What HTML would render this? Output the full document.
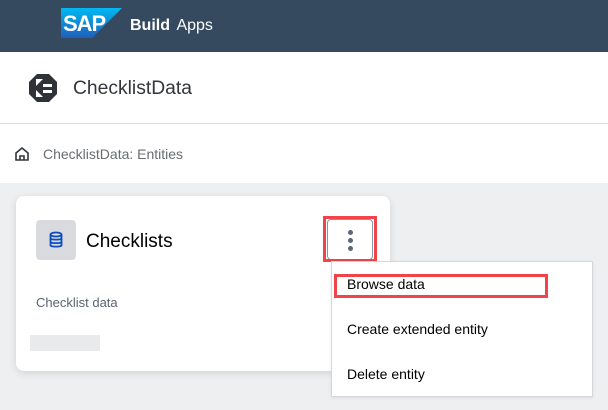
<!DOCTYPE html><html><head><style>
body{margin:0;width:608px;height:410px;overflow:hidden;font-family:"Liberation Sans",sans-serif;background:#eeeff1;position:relative}
div{position:absolute;box-sizing:border-box}
</style></head><body>
<div style="left:0;top:0;width:608px;height:52px;background:#354a5f"></div>
<svg style="position:absolute;left:61px;top:8px" width="61" height="30" viewBox="0 0 61 30"><defs><linearGradient id="g" x1="0" y1="0" x2="0" y2="1"><stop offset="0" stop-color="#00b8f1"/><stop offset="1" stop-color="#1e5fbb"/></linearGradient></defs><polygon points="0,0 61,0 31,30 0,30" fill="url(#g)"/><text x="2" y="23" font-family="Liberation Sans" font-weight="bold" font-size="22" fill="#fff" letter-spacing="-1">SAP</text></svg>
<div style="left:130px;top:17px;color:#fff;font-size:16px;font-weight:bold">Build <span style="font-weight:normal;margin-left:2px">Apps</span></div>
<div style="left:0;top:52px;width:608px;height:131px;background:#fff"></div>
<div style="left:0;top:123px;width:608px;height:1px;background:#dcdcdc"></div>
<svg style="position:absolute;left:28px;top:73px" width="30" height="30" viewBox="0 0 30 30"><polygon points="9,1 21,1 29,9 29,21 21,29 9,29 1,21 1,9" fill="#2f3338"/><polygon points="8,6 15,6 8,13" fill="#fff"/><polygon points="8,17 8,24 15,24" fill="#fff"/><rect x="15" y="11" width="9" height="3" fill="#fff"/><rect x="15" y="17" width="9" height="3" fill="#fff"/></svg>
<div style="left:73px;top:78px;font-size:19.3px;color:#32363a">ChecklistData</div>
<svg style="position:absolute;left:14px;top:146px" width="16" height="16" viewBox="0 0 16 16"><path d="M2 7 L8 2 L14 7 V14 H2 Z M6 14 V10 H10 V14" fill="none" stroke="#32363a" stroke-width="1.6"/></svg>
<div style="left:43px;top:146px;font-size:14px;color:#6a6d70">ChecklistData: Entities</div>
<div style="left:16px;top:196px;width:374px;height:175px;background:#fff;border-radius:8px;box-shadow:0 2px 8px rgba(0,0,0,.12)"></div>
<div style="left:36px;top:220px;width:40px;height:40px;background:#d9dbdf;border-radius:4px"></div>
<svg style="position:absolute;left:47px;top:231px" width="18" height="18" viewBox="0 0 18 18"><g fill="none" stroke="#0a4bbf" stroke-width="1.8"><ellipse cx="9" cy="3.5" rx="5.5" ry="2"/><path d="M3.5 3.5V14.5C3.5 16 14.5 16 14.5 14.5V3.5M3.5 7.5C3.5 9 14.5 9 14.5 7.5M3.5 11C3.5 12.5 14.5 12.5 14.5 11"/></g></svg>
<div style="left:86px;top:231px;font-size:19px;color:#000">Checklists</div>
<div style="left:36px;top:295px;font-size:13px;color:#5b6470">Checklist data</div>
<div style="left:30px;top:335px;width:70px;height:16px;background:#e9eaec"></div>
<div style="left:327px;top:219px;width:46px;height:41px;border:1px solid #8a96a3;border-radius:4px;background:#fff"></div>
<div style="left:348px;top:230px;width:5px;height:5px;border-radius:50%;background:#5b6878"></div>
<div style="left:348px;top:238px;width:5px;height:5px;border-radius:50%;background:#5b6878"></div>
<div style="left:348px;top:246px;width:5px;height:5px;border-radius:50%;background:#5b6878"></div>
<div style="left:323px;top:216px;width:54px;height:46px;border:3px solid #f0434a"></div>
<div style="left:331px;top:261px;width:262px;height:136px;background:#fff;border:1px solid #d5d7da;box-shadow:0 1px 3px rgba(0,0,0,.08)"></div>
<div style="left:347px;top:276px;font-size:14px;color:#000">Browse data</div>
<div style="left:347px;top:321px;font-size:14px;color:#000">Create extended entity</div>
<div style="left:347px;top:366px;font-size:14px;color:#000">Delete entity</div>
<div style="left:334px;top:274px;width:214px;height:24px;border:3px solid #f0434a"></div>
</body></html>
